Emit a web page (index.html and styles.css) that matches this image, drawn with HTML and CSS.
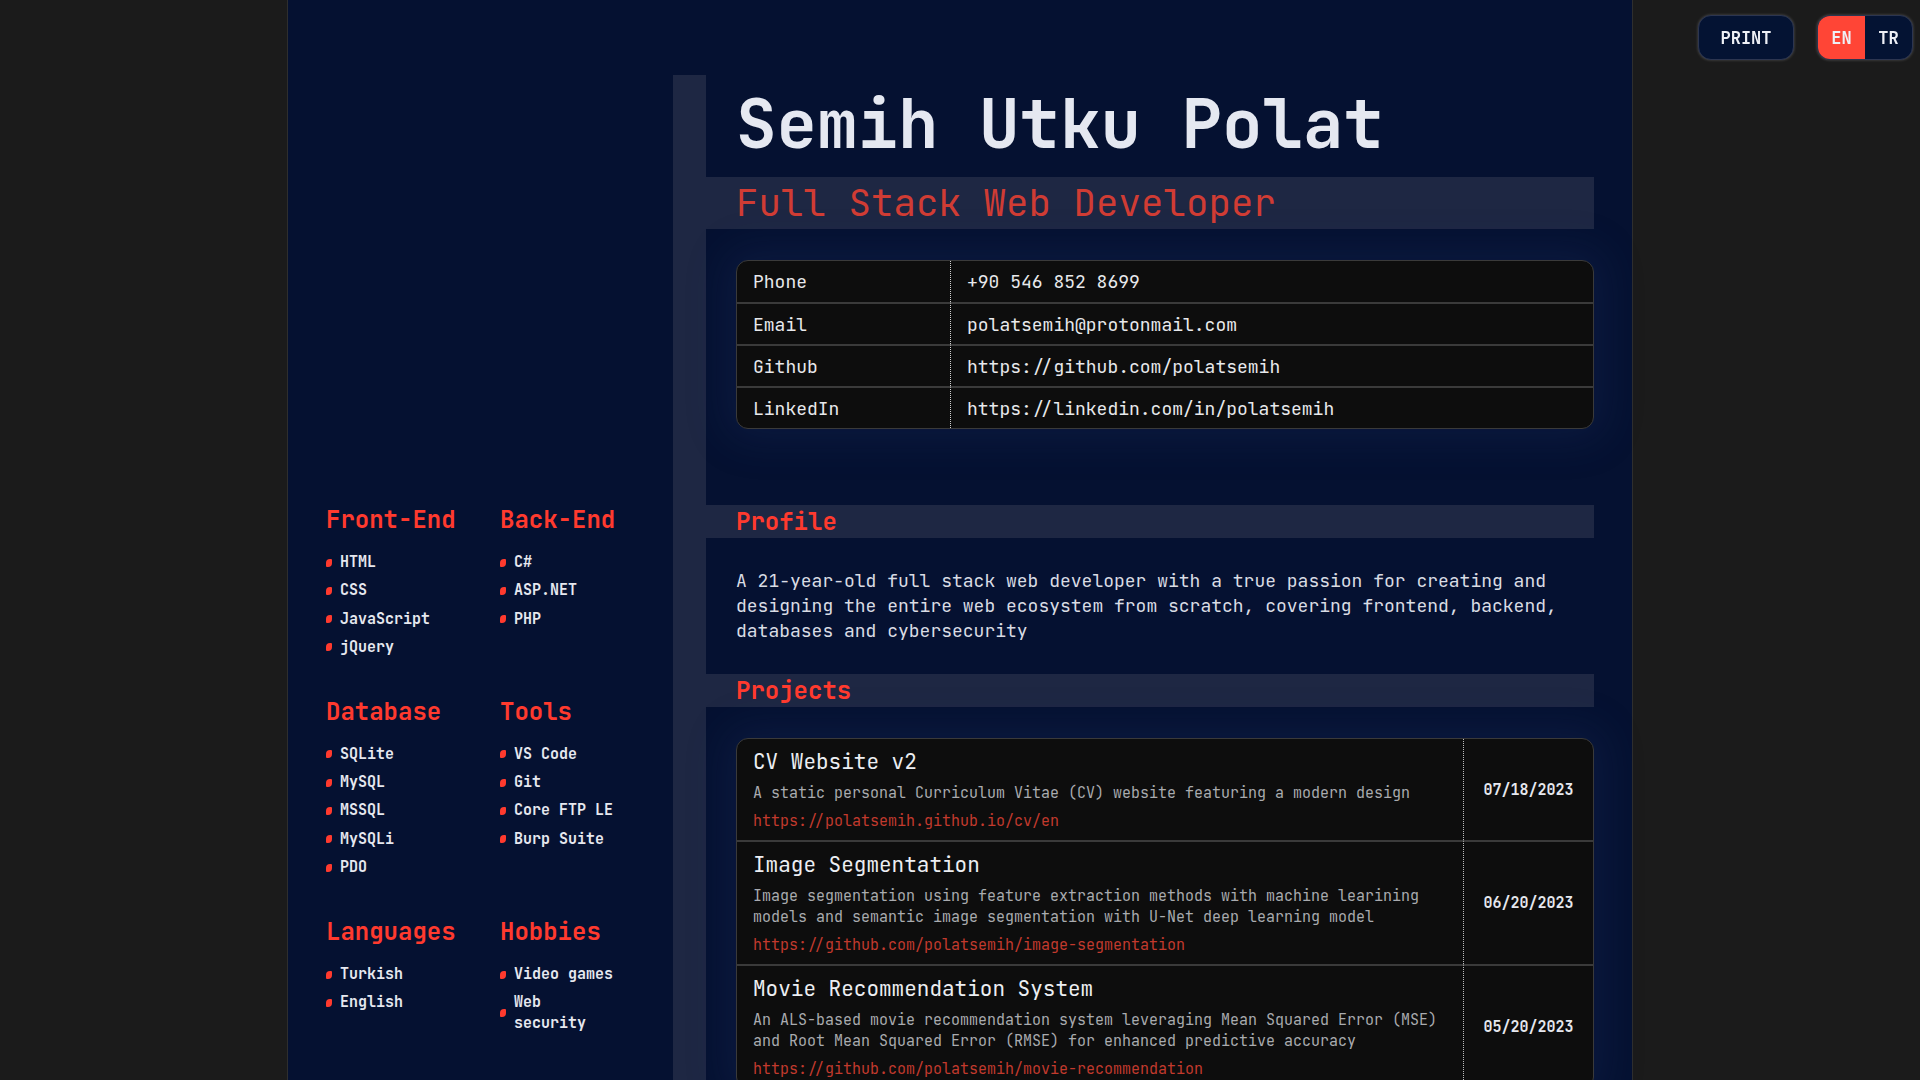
FILE: index.html
```html
<!DOCTYPE html>
<html lang="en">
<head>
<meta charset="utf-8">
<title>Semih Utku Polat - CV</title>
<link rel="stylesheet" href="styles.css">
</head>
<body>
<div class="controls">
  <button class="btn print-btn">PRINT</button>
  <div class="lang">
    <span class="lang-opt active">EN</span>
    <span class="lang-opt">TR</span>
  </div>
</div>
<div class="page">
  <aside class="sidebar">
    <div class="skills">
      <div class="group">
        <h3 class="group-title">Front-End</h3>
        <ul class="items">
          <li><span class="dot"></span><span>HTML</span></li>
          <li><span class="dot"></span><span>CSS</span></li>
          <li><span class="dot"></span><span>JavaScript</span></li>
          <li><span class="dot"></span><span>jQuery</span></li>
        </ul>
      </div>
      <div class="group">
        <h3 class="group-title">Back-End</h3>
        <ul class="items">
          <li><span class="dot"></span><span>C#</span></li>
          <li><span class="dot"></span><span>ASP.NET</span></li>
          <li><span class="dot"></span><span>PHP</span></li>
        </ul>
      </div>
      <div class="group">
        <h3 class="group-title">Database</h3>
        <ul class="items">
          <li><span class="dot"></span><span>SQLite</span></li>
          <li><span class="dot"></span><span>MySQL</span></li>
          <li><span class="dot"></span><span>MSSQL</span></li>
          <li><span class="dot"></span><span>MySQLi</span></li>
          <li><span class="dot"></span><span>PDO</span></li>
        </ul>
      </div>
      <div class="group">
        <h3 class="group-title">Tools</h3>
        <ul class="items">
          <li><span class="dot"></span><span>VS Code</span></li>
          <li><span class="dot"></span><span>Git</span></li>
          <li><span class="dot"></span><span>Core FTP LE</span></li>
          <li><span class="dot"></span><span>Burp Suite</span></li>
        </ul>
      </div>
      <div class="group">
        <h3 class="group-title">Languages</h3>
        <ul class="items">
          <li><span class="dot"></span><span>Turkish</span></li>
          <li><span class="dot"></span><span>English</span></li>
        </ul>
      </div>
      <div class="group">
        <h3 class="group-title">Hobbies</h3>
        <ul class="items">
          <li><span class="dot"></span><span>Video games</span></li>
          <li><span class="dot"></span><span>Web security</span></li>
        </ul>
      </div>
    </div>
  </aside>
  <main class="main">
    <h1 class="name">Semih Utku Polat</h1>
    <div class="band subtitle-band"><h2 class="subtitle">Full Stack Web Developer</h2></div>
    <div class="block">
      <table class="contact">
        <tr><td class="c-label">Phone</td><td class="c-value">+90 546 852 8699</td></tr>
        <tr><td class="c-label">Email</td><td class="c-value">polatsemih@protonmail.com</td></tr>
        <tr><td class="c-label">Github</td><td class="c-value">https://github.com/polatsemih</td></tr>
        <tr><td class="c-label">LinkedIn</td><td class="c-value">https://linkedin.com/in/polatsemih</td></tr>
      </table>
    </div>
    <div class="band section-band"><h2 class="section-title">Profile</h2></div>
    <div class="block">
      <p class="profile-text">A 21-year-old full stack web developer with a true passion for creating and designing the entire web ecosystem from scratch, covering frontend, backend, databases and cybersecurity</p>
    </div>
    <div class="band section-band"><h2 class="section-title">Projects</h2></div>
    <div class="block">
      <table class="projects">
        <tr>
          <td class="p-info">
            <div class="p-title">CV Website v2</div>
            <div class="p-desc">A static personal Curriculum Vitae (CV) website featuring a modern design</div>
            <div class="p-link">https://polatsemih.github.io/cv/en</div>
          </td>
          <td class="p-date">07/18/2023</td>
        </tr>
        <tr>
          <td class="p-info">
            <div class="p-title">Image Segmentation</div>
            <div class="p-desc">Image segmentation using feature extraction methods with machine learining models and semantic image segmentation with U-Net deep learning model</div>
            <div class="p-link">https://github.com/polatsemih/image-segmentation</div>
          </td>
          <td class="p-date">06/20/2023</td>
        </tr>
        <tr>
          <td class="p-info">
            <div class="p-title">Movie Recommendation System</div>
            <div class="p-desc">An ALS-based movie recommendation system leveraging Mean Squared Error (MSE) and Root Mean Squared Error (RMSE) for enhanced predictive accuracy</div>
            <div class="p-link">https://github.com/polatsemih/movie-recommendation</div>
          </td>
          <td class="p-date">05/20/2023</td>
        </tr>
      </table>
    </div>
  </main>
</div>
</body>
</html>
```

FILE: styles.css
```css
* { box-sizing: border-box; }

html, body {
  margin: 0;
  padding: 0;
}

body {
  background: #1b1b1b;
  font-family: "JetBrains Mono", "DejaVu Sans Mono", "Liberation Mono", monospace;
  color: #e4e7ee;
}

.controls {
  position: fixed;
  top: 15px;
  right: 7px;
  display: flex;
  gap: 23px;
  z-index: 10;
}

.btn {
  font-family: inherit;
}

.print-btn {
  width: 96px;
  height: 45px;
  border-radius: 13px;
  background: #041333;
  color: #eef0f6;
  border: 1px solid #2c3550;
  box-shadow: 0 0 3px rgba(255, 255, 255, 0.25);
  font-size: 17px;
  font-weight: bold;
  padding: 0;
}

.lang {
  display: flex;
  width: 96px;
  height: 45px;
  border-radius: 13px;
  overflow: hidden;
  border: 1px solid #2c3550;
  box-shadow: 0 0 3px rgba(255, 255, 255, 0.25);
  background: #041333;
}

.lang-opt {
  flex: 1;
  display: flex;
  align-items: center;
  justify-content: center;
  font-size: 17px;
  font-weight: bold;
  color: #eef0f6;
}

.lang-opt.active {
  background: #ff4536;
}

.page {
  width: 1346px;
  margin: 0 auto;
  min-height: 100vh;
  background: #051131;
  border-left: 1px solid #2e2e2e;
  border-right: 1px solid #2e2e2e;
  display: flex;
}

.sidebar {
  width: 385px;
  flex: none;
  padding: 505px 0 40px 38px;
}

.skills {
  display: grid;
  grid-template-columns: 142px 116px;
  column-gap: 32px;
  row-gap: 39px;
}

.group-title {
  margin: 0;
  font-size: 24px;
  line-height: 30px;
  font-weight: bold;
  color: #ff3a2e;
}

.items {
  list-style: none;
  margin: 17px 0 0;
  padding: 0;
  display: flex;
  flex-direction: column;
  gap: 7.3px;
}

.items li {
  display: flex;
  align-items: center;
  gap: 8px;
  font-size: 15px;
  line-height: 21px;
  font-weight: bold;
  color: #e6e8ef;
}

.dot {
  flex: none;
  width: 6px;
  height: 8px;
  background: #ff3a2e;
  border-radius: 4px 1px 4px 1px;
}

.main {
  flex: 1;
  margin-top: 75px;
  border-left: 33px solid #1e2743;
  padding-right: 38px;
  padding-bottom: 40px;
}

.name {
  margin: 0;
  padding: 0 0 5px 30px;
  font-size: 67.5px;
  line-height: 97px;
  font-weight: bold;
  color: #e5e8f1;
}

.band {
  background: #1e2743;
  padding-left: 30px;
}

.subtitle {
  margin: 0;
  font-size: 37.5px;
  line-height: 52px;
  font-weight: normal;
  color: #d03c34;
}

.block {
  padding-left: 30px;
}

.contact {
  width: 100%;
  margin: 31px 0 76px;
  border-collapse: separate;
  border-spacing: 0;
  background: #0d0d0d;
  border: 1px solid #3a3a3a;
  border-radius: 12px;
  box-shadow: 0 0 40px 12px rgba(40, 60, 120, 0.18);
  overflow: hidden;
}

.contact td {
  height: 42px;
  padding: 0 16px;
  font-size: 18px;
  color: #e8e9ec;
  border-top: 2px solid #3a3a3a;
}

.contact tr:first-child td {
  border-top: none;
  height: 41px;
}

.c-label {
  width: 214px;
  border-right: 1px dotted #d0d0d0;
}

.section-band {
  height: 33px;
}

.section-title {
  margin: 0;
  font-size: 24px;
  line-height: 33px;
  font-weight: bold;
  color: #ff3a2e;
}

.profile-text {
  margin: 30px 0 31px;
  font-size: 18px;
  line-height: 25px;
  color: #d9dce4;
}

.projects {
  width: 100%;
  margin-top: 31px;
  border-collapse: separate;
  border-spacing: 0;
  background: #0d0d0d;
  border: 1px solid #3a3a3a;
  border-radius: 12px;
  box-shadow: 0 0 40px 12px rgba(40, 60, 120, 0.18);
  overflow: hidden;
}

.projects td {
  border-top: 2px solid #3a3a3a;
}

.projects tr:first-child td {
  border-top: none;
}

.p-info {
  padding: 9px 16px 8px 16px;
  border-right: 1px dotted #bdbdbd;
  vertical-align: top;
}

.p-title {
  font-size: 21px;
  line-height: 28px;
  color: #eceef2;
  margin-bottom: 7px;
}

.p-desc {
  font-size: 15px;
  line-height: 21px;
  color: #a9abaf;
  margin-bottom: 7px;
}

.p-link {
  font-size: 15px;
  line-height: 21px;
  color: #c23a2d;
}

.p-date {
  width: 129px;
  text-align: center;
  vertical-align: middle;
  font-size: 15px;
  font-weight: bold;
  color: #e6e8ef;
}
```
